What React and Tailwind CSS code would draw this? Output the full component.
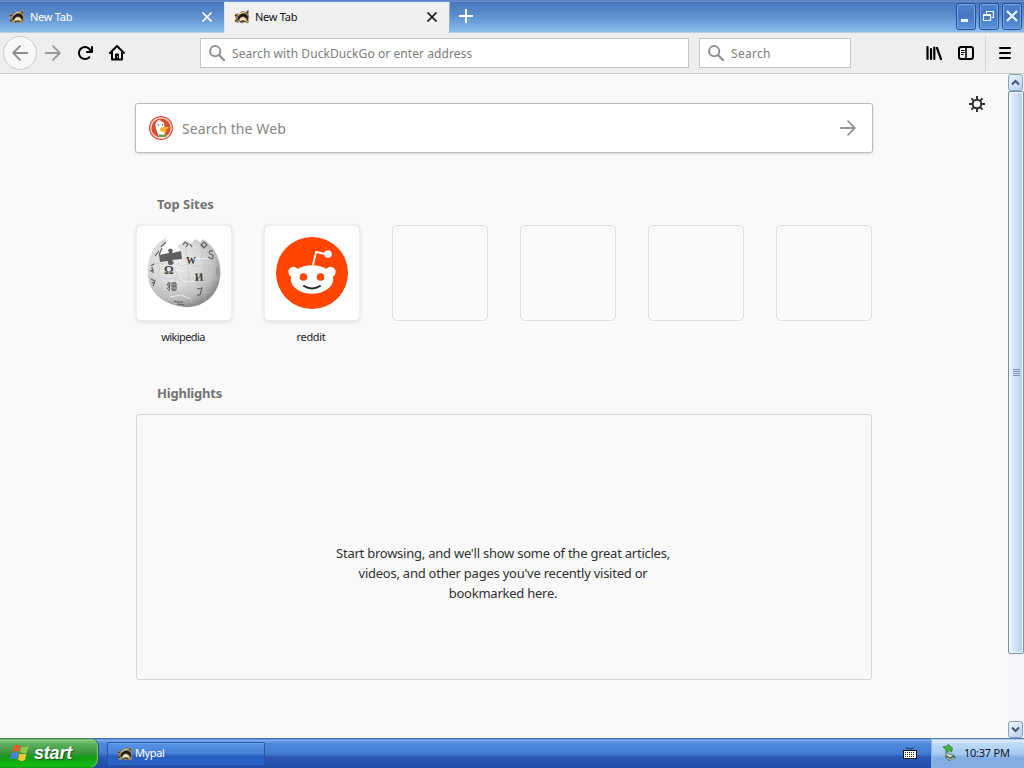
import React from "react";

function Raccoon({ className = "" }) {
  return (
    <svg className={className} width="16" height="16" viewBox="0 0 16 16">
      <path d="M.5 5.500 3 4.500 5 5 7 2.500 10 2 12 3 13.500 1 15 1.500 14.500 5 15.500 8 14.500 10 15 13 13 14.500 11 13 8 14.500 5.500 13 3 14 .5 12.500 2 10Z" fill="#9c8a66" />
      <path d="M3.500 10.500 Q4 5 9 4.500 Q13 4.500 14 8 L13.500 12 Q12 7.500 9 7.500 Q6 7.500 5 11Z" fill="#1f1813" />
      <path d="M5.500 11.500 Q6 8.300 9 8.300 Q11.500 8.500 12.500 12 L10.500 11 8.500 12Z" fill="#efe2bd" />
      <path d="M4.500 6.500 7.500 3.800 10.500 3.500" fill="none" stroke="#e5d8ac" strokeWidth="1" />
      <path d="M1 6.500 3.500 6 M1.200 12 3 10.500 M6 13 8.500 11.800 11 12.800 M13.500 2.500 13 4.500" fill="none" stroke="#3b2c1d" strokeWidth="1.100" />
      <path d="M1.500 8.500 3.500 8" stroke="#b4673e" strokeWidth="1.200" />
    </svg>
  );
}

function Close({ color }) {
  return (
    <svg width="12" height="12" viewBox="0 0 12 12" className="shrink-0">
      <path d="M1.500 1.500 10.500 10.500M10.500 1.500 1.500 10.500" stroke={color} strokeWidth="1.700" fill="none" />
    </svg>
  );
}

function Arrow({ color, flip }) {
  return (
    <svg width="16" height="16" viewBox="0 0 16 16" className={flip ? "rotate-180" : ""}>
      <path d="M15.300 8H1.500M8 1.200 1.200 8 8 14.800" fill="none" stroke={color} strokeWidth="1.800" strokeLinecap="round" strokeLinejoin="round" />
    </svg>
  );
}

function Magnifier() {
  return (
    <svg width="16" height="16" viewBox="0 0 16 16" className="shrink-0">
      <circle cx="6.200" cy="6.200" r="5.100" fill="none" stroke="#909090" strokeWidth="2" />
      <path d="M10 10 15.200 15.200" stroke="#909090" strokeWidth="2.200" strokeLinecap="round" />
    </svg>
  );
}

function TitleBar() {
  return (
    <header className="flex h-[33px] w-full border-b border-[#b9cbe0] bg-[linear-gradient(180deg,#3a61b5_0px,#84a9dc_1px,#4a78bf_2px,#4f7dc3_6px,#5b8bcc_14px,#6fa3dc_23px,#88bdec_32px)]">
      <div className="flex w-[224px] items-center pl-[9px] pr-[11px] pt-[1px]">
        <Raccoon />
        <span className="ml-[5px] flex-1 pt-px font-['Noto_Sans',sans-serif] text-[11px] leading-4 tracking-[-0.25px] text-white">New Tab</span>
        <Close color="#fff" />
      </div>
      <div className="mt-[2px] flex h-[32px] w-[226px] items-center border-x border-l-[#d7e3f1] border-r-[#91b5df] bg-[#f0f0f0] pl-[9px] pr-[11px] pb-[3px]">
        <Raccoon />
        <span className="ml-[5px] flex-1 font-['Noto_Sans',sans-serif] text-[11px] leading-4 tracking-[-0.25px] text-[#111]">New Tab</span>
        <Close color="#111" />
      </div>
      <div className="flex w-8 items-center justify-center">
        <svg width="14" height="14" viewBox="0 0 14 14"><path d="M7 0V14M0 7H14" stroke="#fff" strokeWidth="2" /></svg>
      </div>
      <div className="ml-auto flex gap-[3px] pr-[2px] pt-[3px]">
        {["min", "restore", "close"].map((kind) => (
          <div key={kind} className="flex h-[27px] w-5 items-center justify-center rounded-[3px] border border-[#244f9c] bg-[linear-gradient(#5383ce,#4674c3_45%,#5d94db)] pb-[2px] shadow-[inset_0_0_0_1px_#79a6e2]">
            <svg width="14" height="14" viewBox="0 0 14 14" stroke="#e8fcff" fill="none">
              {kind === "min" && <path d="M2 11.500H9" strokeWidth="3" />}
              {kind === "restore" && <path d="M4.500 5V2.500H11.500V8.500H9.500M4.500 2.500H11.500M1.500 5.500H8.500V11.500H1.500ZM1.500 6.500H8.500" strokeWidth="1.200" />}
              {kind === "close" && <path d="M2 2 12 12M12 2 2 12" strokeWidth="2.100" />}
            </svg>
          </div>
        ))}
      </div>
    </header>
  );
}

function Toolbar() {
  return (
    <nav className="flex h-[41px] items-center border-b border-[#c8c8c8] bg-[#eeeeef] font-['Noto_Sans',sans-serif] text-[12px] text-[#7c7c7c]">
      <div className="ml-[3px] flex h-[34px] w-[34px] items-center justify-center rounded-full border border-[#cccccd] bg-[#f7f7f7]">
        <Arrow color="#8b8b8b" />
      </div>
      <div className="ml-2"><Arrow color="#999" flip /></div>
      <svg className="ml-4" width="16" height="16" viewBox="0 0 16 16">
        <path d="M15 1a1 1 0 0 0-1 1v2.418A6.995 6.995 0 1 0 8 15a6.954 6.954 0 0 0 4.950-2.050 1 1 0 0 0-1.414-1.414A5.019 5.019 0 1 1 12.549 6H10a1 1 0 0 0 0 2h5a1 1 0 0 0 1-1V2a1 1 0 0 0-1-1z" />
      </svg>
      <svg className="ml-4" width="16" height="16" viewBox="0 0 16 16">
        <path d="M1 8 8 1 15 8" fill="none" stroke="#000" strokeWidth="2" strokeLinecap="round" strokeLinejoin="round" />
        <path d="M3 7V14.500H13V7" fill="none" stroke="#000" strokeWidth="2" strokeLinejoin="round" />
        <path d="M6 15V9.500A1 1 0 0 1 7 8.500H9A1 1 0 0 1 10 9.500V15Z" />
        <path d="M8.500 11V12.500" stroke="#eee" strokeWidth=".8" />
      </svg>
      <div className="ml-[75px] flex h-[30px] w-[489px] items-center border border-[#c4c4c4] bg-white pl-2">
        <Magnifier /><span className="ml-[7px] pt-px tracking-[0.07px]">Search with DuckDuckGo or enter address</span>
      </div>
      <div className="ml-[10px] flex h-[30px] w-[152px] items-center border border-[#c4c4c4] bg-white pl-2">
        <Magnifier /><span className="ml-[7px] pt-px tracking-[0.3px]">Search</span>
      </div>
      <svg className="ml-[75px]" width="16" height="16" viewBox="0 0 16 16" stroke="#000" strokeLinecap="round" fill="none">
        <path d="M1.500 2V14M5 4V14M8.300 2.500V14M11 3 15 14" strokeWidth="2.200" />
      </svg>
      <svg className="ml-4" width="16" height="16" viewBox="0 0 16 16" fill="none" stroke="#000">
        <rect x="1" y="2" width="14" height="12" rx="2.200" strokeWidth="2" /><path d="M8 2V14" strokeWidth="1.600" /><path d="M3 5.500H6.500M3 7.500H6.500M3 9.500H5.500" />
      </svg>
      <div className="ml-[11px] h-[35px] w-px bg-[#d3d3d3]" />
      <svg className="ml-[12px]" width="14" height="14" viewBox="0 0 14 14" stroke="#000" strokeWidth="2" strokeLinecap="round">
        <path d="M2 2H12M2 7H12M2 12H12" />
      </svg>
    </nav>
  );
}

function DuckIcon() {
  return (
    <svg width="24" height="24" viewBox="0 0 24 24" className="shrink-0">
      <circle cx="12" cy="12" r="12" fill="#d94d31" />
      <circle cx="12" cy="12" r="10.200" fill="none" stroke="#f6d9cf" strokeWidth="1.200" />
      <path d="M10 21.500C9 17 6.500 13 6.500 9.500C6 6 8.500 4 12 5.500C15 6 15.500 8 15.500 11L16 21C14 22.500 12 22 10 21.500Z" fill="#fff" />
      <path d="M8 5Q11 3 14 6Q11 4.500 8 5Z" fill="#fff" />
      <circle cx="9.300" cy="9" r=".8" fill="#3b4a63" /><circle cx="13.500" cy="8.700" r=".7" fill="#3b4a63" />
      <path d="M11 12.500Q14 10 20 11.200Q19 13.200 16.500 13.800L18 15.500Q14 17 11 14.500Z" fill="#f9b52d" />
      <path d="M10 18 13.500 19 17 17.500V21L13 21 10 21Z" fill="#6f9f48" />
    </svg>
  );
}

function Wikipedia() {
  return (
    <svg width="76" height="76" viewBox="0 0 76 76" fontFamily="Liberation Serif" fill="#3c3c3c" stroke="none">
      <defs><radialGradient id="globe" cx="38%" cy="34%" r="68%"><stop offset="0" stopColor="#ececec" /><stop offset=".5" stopColor="#dadada" /><stop offset=".8" stopColor="#bdbdbd" /><stop offset="1" stopColor="#8c8c8c" /></radialGradient></defs>
      <path d="M20 3 19 8 15 12 14 18 13 22 24 24 33 21 35 16 31 11 37 7 41 6 45 9 49 4 54 7 57 4Q74 15 74.500 38Q73 59 58 67.500Q46 74.500 32 71Q10 66 3 48Q-1 27 8 14Q12 7 20 3Z" fill="url(#globe)" />
      <path d="M13 20 23 18 22 15Q24 12 27 15L26 18 35 16 36 24 26 25Q30 29 25 30Q21 30 22 26L14 27Z" fill="#606060" />
      <g fill="none" stroke="#c0c0c0" strokeWidth=".5">
        <path d="M5 29H11Q12 25 15 29H21M30 29H34Q35 33 38 30L45 29Q49 34 52 30L62 31 72 33M4 43 13 44Q16 39 19 44L31 43Q35 48 38 44H48Q51 39 54 44L72 45M8 56 19 57Q22 53 25 57H35Q38 53 40 57L51 58 65 57M12 27 14 35Q9 38 14 42L16 53 20 64M29 31V37Q34 40 29 44L31 57 30 69M39 11 41 22Q37 25 42 28L43 46 42 58 46 69M54 8 57 19Q52 23 58 28L59 44Q55 49 58 52L59 66" />
      </g>
      <path d="M14 36 24 35Q27 31 30 35L39 36M34 44 40 47 49 46M46 22 55 24 66 23M24 62 35 60 45 64" fill="none" stroke="#f3f3f3" strokeWidth=".8" />
      <text x="18" y="39" fontSize="12" fontWeight="bold">Ω</text>
      <text x="40" y="29" fontSize="10" fontWeight="bold">W</text>
      <text x="49" y="46" fontSize="11" fontWeight="bold" transform="rotate(-4 49 46)">И</text>
      <path d="M23 47 21 50H24L21 54M24 47 23 56M26 48H30V55H26ZM26 51H30M28 47V56" fill="none" stroke="#555" strokeWidth="1" />
      <g fill="none" stroke="#626262" strokeWidth="1.200">
        <path d="M51 54 56 53 54 60 51 60M67 16Q62 15 64 19Q69 20 66 24L62 22M55 10 58 7 61 10 58 13ZM55 10 59 13M37 10 39 7 42 9 40 12M44 9 46 12M5 31 8 29M4 36 8 35M6 32 7 38M5 44 9 46 7 51M6 47 8 49M28 66 32 67 37 67M31 69 38 70M9 21 13 16M13 20 16 13M15 12 20 7" />
      </g>
      <path d="M70 32 73 31 73 39 70 40Z" fill="#9a9a9a" />
    </svg>
  );
}

function Reddit() {
  return (
    <svg width="72" height="72" viewBox="0 0 72 72">
      <circle cx="36" cy="36" r="36" fill="#ff4500" />
      <path d="M37 28 40 15 52 17.500" fill="none" stroke="#fff" strokeWidth="1.800" strokeLinejoin="round" />
      <circle cx="52" cy="17" r="3.800" fill="#fff" /><circle cx="17.500" cy="35" r="5.200" fill="#fff" /><circle cx="54.500" cy="35" r="5.200" fill="#fff" />
      <ellipse cx="36" cy="42.500" rx="21.200" ry="14.300" fill="#fff" />
      <circle cx="27.500" cy="40" r="3.800" fill="#ff4500" /><circle cx="44.500" cy="40" r="3.800" fill="#ff4500" />
      <path d="M28 49Q36 54 44 49" fill="none" stroke="#222" strokeWidth="1.900" strokeLinecap="round" />
    </svg>
  );
}

function Tile({ label, children, tracking = "" }) {
  return (
    <div className="flex w-24 flex-col items-center">
      <div className={children ? "flex h-24 w-24 items-center justify-center rounded-[5px] border border-[#ececed] bg-white shadow-[0_1px_4px_rgba(12,12,13,.12)]" : "h-24 w-24 rounded-[5px] border border-[#dfdfdf] bg-[#f9f9fa]"}>{children}</div>
      <span className={"mt-2 pr-[2px] font-['Noto_Sans',sans-serif] text-[11px] leading-4 text-[#222] " + tracking}>{label}</span>
    </div>
  );
}

function Scrollbar() {
  const button = "flex h-[17px] w-[15px] shrink-0 items-center justify-center rounded-[3px] border border-[#8ba1bb] bg-[linear-gradient(135deg,#edf5ff,#b8d0f0)]";
  return (
    <div className="flex w-4 flex-col items-start bg-[#f4f6fb]">
      <div className={button}><svg width="9" height="7" viewBox="0 0 9 7"><path d="M1 5.500 4.500 2 8 5.500" stroke="#44566f" strokeWidth="2" fill="none" /></svg></div>
      <div className="flex h-[563px] w-4 flex-col items-center justify-center gap-px rounded-[2px] border border-[#7792a9] bg-[linear-gradient(90deg,#f0f7ff,#d2e2fa_45%,#b5ceec)] shadow-[inset_0_0_0_1px_#edf8ff]">
        {[0, 1, 2, 3].map((n) => <i key={n} className="block h-px w-[7px] bg-[#7a92b2]" />)}
      </div>
      <div className="flex-1" />
      <div className={button}><svg width="9" height="7" viewBox="0 0 9 7"><path d="M1 1.500 4.500 5 8 1.500" stroke="#44566f" strokeWidth="2" fill="none" /></svg></div>
    </div>
  );
}

function Taskbar() {
  return (
    <footer className="flex h-[30px] bg-[linear-gradient(#2455ad_0px,#80afe9_2px,#4f8bdd_5px,#4379d2_16px,#2858b5_19px,#214baa_30px)] font-['Noto_Sans',sans-serif] text-[11px] text-white">
      <div className="flex h-[30px] w-[99px] shrink-0 items-center rounded-r-[9px] border-r border-[#215b27] bg-[linear-gradient(#276a39_0px,#8ace83_2px,#5cb05c_6px,#3c9440_15px,#109c15_19px,#13bd14_28px,#078e0a_30px)] pl-[10px] shadow-[inset_-1px_0px_1px_#8fc98f]">
        <svg width="20" height="20" viewBox="0 0 20 20">
          <path d="M4 3Q7 0 10.500 3L9 9Q6 7 2 9Z" fill="#e85b2d" /><path d="M11.500 3.500Q14 5 18.500 3L17 9.500Q13 11 10 9Z" fill="#8cc842" />
          <path d="M1.500 10.500Q5 8 8.500 10.500L7 16.500Q3 14 0 16.500Z" fill="#4c82e4" /><path d="M9.500 10.500Q12 12 16.500 10.500L15 17Q11 19 8 16.500Z" fill="#ffc734" />
        </svg>
        <span className="ml-1 pb-px font-['Liberation_Sans',sans-serif] text-[18px] font-bold italic leading-5 tracking-[-0.2px] [text-shadow:1px_1px_1px_#1b5322]">start</span>
      </div>
      <div className="ml-[8px] mt-1 flex h-[24px] w-[158px] items-center rounded-[2px] border border-[#2857a8] bg-[linear-gradient(#5796e6,#4a83d7_45%,#2860c2_60%,#2961c4)] pl-[9px] pb-px shadow-[inset_0_1px_0_#6ba3e6]">
        <Raccoon /><span className="ml-[2px] tracking-[-0.4px]">Mypal</span>
      </div>
      <div className="ml-auto flex w-[28px] items-center">
        <svg width="14" height="14" viewBox="0 0 14 14">
          <path d="M3 2H5L6 3H8L9 2H11" stroke="#1b2f56" fill="none" /><rect x=".5" y="4.500" width="13" height="8" fill="#fff" stroke="#111" />
          <path d="M2 6.500H12M2 8.500H12M2 10.500H12" stroke="#222" strokeDasharray="1 1" />
        </svg>
      </div>
      <div className="flex w-[93px] items-center border-l border-[#83b5e9] bg-[linear-gradient(#2457ad_0px,#e2f1fd_2px,#bedaf7_6px,#a5c8f0_16px,#83ade2_20px,#84afe4_30px)] pl-[10px] text-[#0b1422]">
        <svg width="16" height="18" viewBox="0 0 16 18">
          <path d="M4 8 12 11 14 14 7 17 3 13Z" fill="#536b5a" /><path d="M5 9 11 11.500 8 13.500 4 11Z" fill="#c7d4c7" /><path d="M5 14 8 15.500 12 14" stroke="#bad2bd" strokeWidth="1" fill="none" />
          <path d="M1 3 5 2 6 0.500 10.500 4 9.500 8 7.500 6.500 4 8.500 4 5.500Z" fill="#42b33d" stroke="#207223" strokeWidth=".7" />
        </svg>
        <span className="ml-[6px] whitespace-nowrap tracking-[-0.25px]">10:37 PM</span>
      </div>
    </footer>
  );
}

export default function App() {
  return (
    <div className="flex h-[768px] w-[1024px] flex-col overflow-hidden bg-[#f9f9fa]">
      <TitleBar />
      <Toolbar />
      <div className="flex h-[664px]">
        <main className="relative w-[1008px] px-[136px] pt-[29px] font-['Noto_Sans',sans-serif]">
          <svg className="absolute right-[23px] top-[22px]" width="16" height="16" viewBox="0 0 16 16" fill="none" stroke="#303033">
            <circle cx="8" cy="8" r="4.300" strokeWidth="2" />
            <path d="M8 0V3.500M8 12.500V16M0 8H3.500M12.500 8H16M2.400 2.400 4.900 4.900M11.100 11.100 13.600 13.600M13.600 2.400 11.100 4.900M4.900 11.100 2.400 13.600" strokeWidth="2" />
          </svg>
          <div className="-mx-px flex h-[50px] items-center rounded-[3px] border border-[#bcbcbc] bg-white pl-[13px] pr-[16px] shadow-[0_1px_3px_rgba(0,0,0,.13)]">
            <DuckIcon />
            <span className="ml-[9px] flex-1 text-[14px] tracking-[0.1px] text-[#858585]">Search the Web</span>
            <Arrow color="#959595" flip />
          </div>
          <h2 className="ml-[21px] mt-[41px] text-[13px] font-bold leading-5 tracking-[-0.05px] text-[#737373]">Top Sites</h2>
          <section className="mt-[11px] flex justify-between">
            <Tile label="wikipedia" tracking="tracking-[-0.6px]"><Wikipedia /></Tile>
            <Tile label="reddit" tracking="tracking-[-0.35px]"><Reddit /></Tile>
            <Tile /><Tile /><Tile /><Tile />
          </section>
          <h2 className="ml-[21px] mt-[38px] text-[13px] font-bold leading-5 tracking-[-0.2px] text-[#737373]">Highlights</h2>
          <section className="mt-[11px] flex h-[266px] flex-col items-center rounded-[3px] border border-[#d7d7db] pt-[128px] text-center text-[13px] leading-5 text-[#303030]">
            <p className="w-[350px] pr-[2px] tracking-[-0.24px]">Start browsing, and we'll show some of the great articles,<br />videos, and other pages you've recently visited or<br />bookmarked here.</p>
          </section>
        </main>
        <Scrollbar />
      </div>
      <Taskbar />
    </div>
  );
}
